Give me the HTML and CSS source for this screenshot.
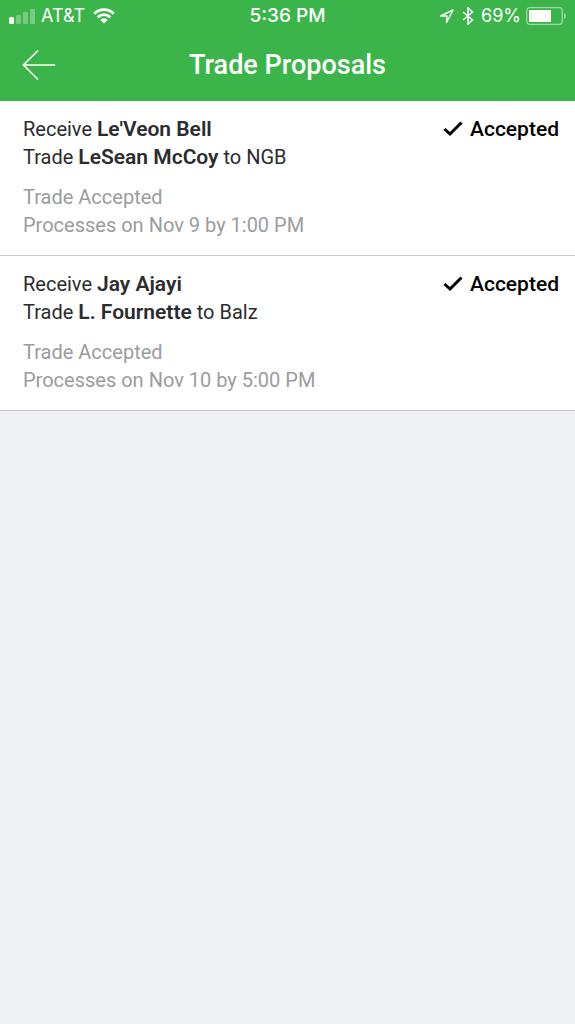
FILE: index.html
```html
<!DOCTYPE html>
<html lang="en">
<head>
<meta charset="utf-8">
<meta name="viewport" content="width=device-width, initial-scale=1">
<title>Trade Proposals</title>
<link rel="stylesheet" href="styles.css">
</head>
<body>
<header class="top">
  <div class="status">
    <div class="status-left">
      <svg class="signal" width="26" height="16" viewBox="0 0 26 16" aria-hidden="true">
        <rect x="0" y="9" width="5" height="7" rx="1.500" fill="#fff"/>
        <g fill="#fff" opacity=".3"><rect x="7" y="7" width="5" height="9" rx="1"/><rect x="14" y="4" width="5" height="12" rx="1"/><rect x="21" y="1" width="5" height="15" rx="1"/></g>
      </svg>
      <span>AT&amp;T</span>
      <svg class="wifi" width="22" height="16" viewBox="0 0 22 16" aria-hidden="true">
        <path d="M1.3 5.7a13.8 13.8 0 0 1 19.4 0M4.700 9.200a8.900 8.900 0 0 1 12.600 0" fill="none" stroke="#fff" stroke-width="2.700"/>
        <path d="M7.200 11.700a5.400 5.400 0 0 1 7.600 0L11 15.500z" fill="#fff"/>
      </svg>
    </div>
    <time class="clock">5:36 PM</time>
    <div class="status-right">
      <svg width="15" height="15" viewBox="0 0 15 15" aria-hidden="true"><path d="M14 1 1.500 7H8l-.5 6.500z" fill="none" stroke="#fff" stroke-width="1.400" stroke-linejoin="round"/></svg>
      <svg class="bluetooth" width="12" height="18" viewBox="0 0 12 18" aria-hidden="true"><path d="m1 5 9.500 8L6 17V1l4.500 4L1 13" fill="none" stroke="#fff" stroke-width="1.500"/></svg>
      <span>69%</span>
      <svg width="40" height="18" viewBox="0 0 40 18" aria-hidden="true"><rect x=".7" y=".7" width="35.600" height="16.600" rx="3" fill="none" stroke="#fff" stroke-opacity=".5" stroke-width="1.300"/><rect x="3" y="3" width="22" height="12" rx="1" fill="#fff"/><path d="M38 6q2 1 2 3t-2 3z" fill="#fff" opacity=".5"/></svg>
    </div>
  </div>
  <nav class="bar">
    <button class="back" type="button" aria-label="Back"><svg width="34" height="30" viewBox="0 0 34 30" aria-hidden="true"><path d="M15.500 1 1.500 15l14 14M1.500 15H32.500" fill="none" stroke="#fff" stroke-width="1.700" stroke-linecap="round"/></svg></button>
    <h1 class="title">Trade Proposals</h1>
  </nav>
</header>
<main>
  <article class="trade">
    <div class="details">
      <p>Receive <strong>Le'Veon Bell</strong></p>
      <p>Trade <strong>LeSean McCoy</strong> to NGB</p>
      <div class="note"><p>Trade Accepted</p><p>Processes on Nov 9 by 1:00 PM</p></div>
    </div>
    <div class="result"><svg width="20" height="16" viewBox="0 0 20 16" aria-hidden="true"><path d="m1.500 8 5.500 5L18.500 1.500" fill="none" stroke="#000" stroke-width="3"/></svg><span>Accepted</span></div>
  </article>
  <article class="trade">
    <div class="details">
      <p>Receive <strong>Jay Ajayi</strong></p>
      <p>Trade <strong>L. Fournette</strong> to Balz</p>
      <div class="note"><p>Trade Accepted</p><p>Processes on Nov 10 by 5:00 PM</p></div>
    </div>
    <div class="result"><svg width="20" height="16" viewBox="0 0 20 16" aria-hidden="true"><path d="m1.500 8 5.500 5L18.500 1.500" fill="none" stroke="#000" stroke-width="3"/></svg><span>Accepted</span></div>
  </article>
</main>
</body>
</html>
```
FILE: styles.css
```css
* { box-sizing: border-box; }
body {
  margin: 0;
  background: #f0f1f4;
  color: #2b2c2d;
  font: 20px/28px Roboto, "Liberation Sans", sans-serif;
}
p, h1 { margin: 0; }
p { height: 28px; white-space: nowrap; }
svg { display: block; flex: none; }
.top { background: #3bb54a; color: #fff; }
.status {
  display: grid;
  grid-template-columns: 1fr auto 1fr;
  align-items: center;
  height: 32px;
  padding: 0 9px;
  font: 18px/32px Inter, sans-serif;
}
.status-left, .status-right { display: flex; align-items: center; gap: 6px; }
.status-right { gap: 5px; }
.status-right svg:first-child { margin-right: 1px; }
.bluetooth { margin: 0 2px; }
.clock { font-size: 19px; font-weight: 500; }
.status-left, .status-right { min-width: 0; }
.wifi { margin-left: 2px; }
.bar {
  display: grid;
  grid-template-columns: 1fr auto 1fr;
  align-items: center;
  height: 69px;
  padding: 0 22px 3px;
}
.back { justify-self: start; padding: 0; border: 0; background: none; cursor: pointer; }
.title { font-size: 27px; line-height: 32px; font-weight: 500; }
.status-right { justify-content: flex-end; }
.trade {
  display: flex;
  justify-content: space-between;
  padding: 14px 16px 16px 23px;
  background: #fff;
  border-bottom: 1px solid #c6c7c9;
}
.trade strong { font-size: 21px; font-weight: 600; }
.note { margin-top: 12px; color: #9b9c9e; }
.result { display: flex; align-items: center; align-self: flex-start; gap: 7px; color: #000; font-size: 21px; font-weight: 500; }
```
